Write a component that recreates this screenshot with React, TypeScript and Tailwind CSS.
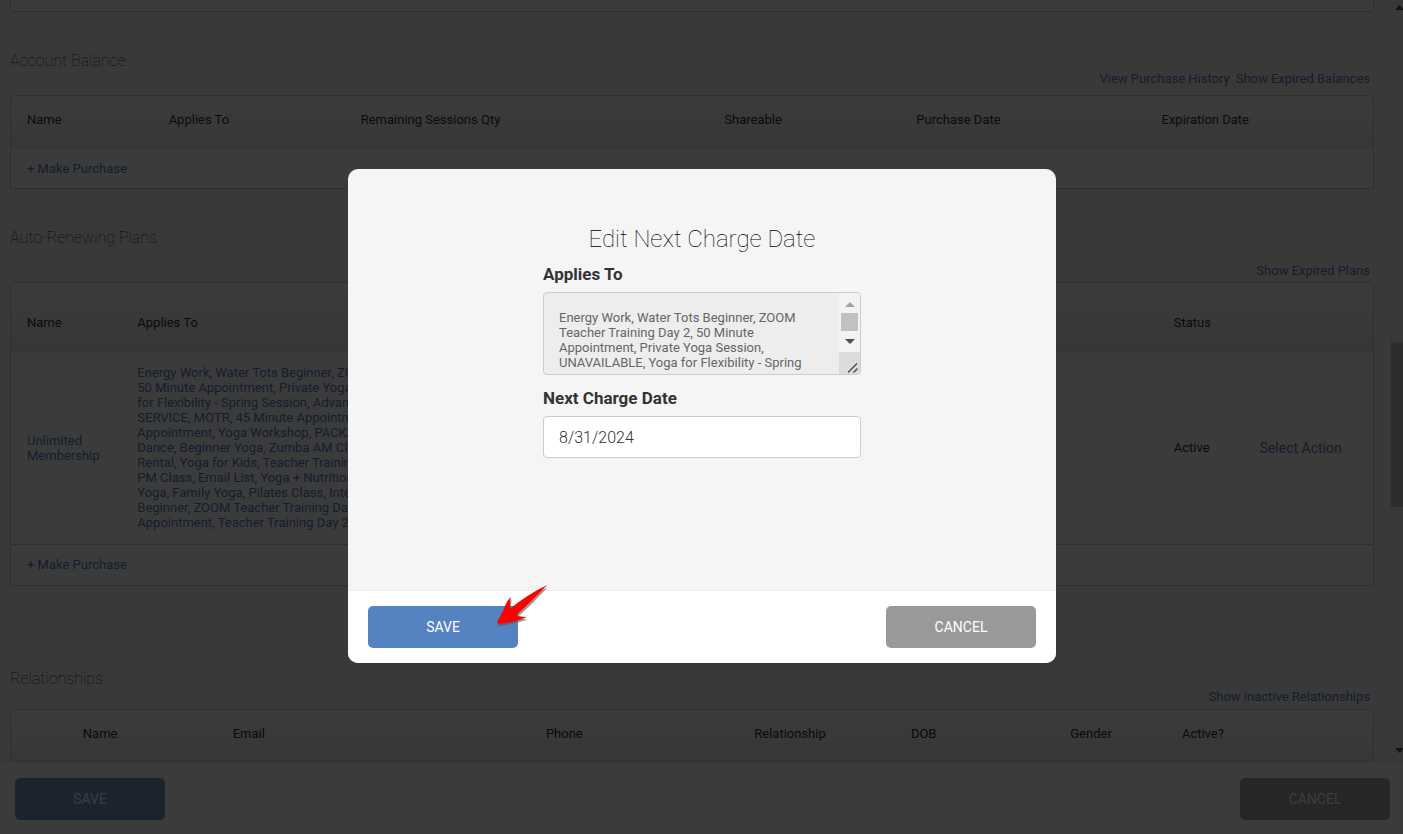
import type { ReactNode } from "react";

const planServices = [
  "Energy Work, Water Tots Beginner, ZOOM Teacher Training Day 2,",
  "50 Minute Appointment, Private Yoga Session, UNAVAILABLE, Yoga",
  "for Flexibility - Spring Session, Advanced Yoga, Massage,",
  "SERVICE, MOTR, 45 Minute Appointment, 30 Minute",
  "Appointment, Yoga Workshop, PACKAGE, Meditation,",
  "Dance, Beginner Yoga, Zumba AM Class, Room",
  "Rental, Yoga for Kids, Teacher Training Day 1, Zumba",
  "PM Class, Email List, Yoga + Nutrition, Prenatal",
  "Yoga, Family Yoga, Pilates Class, Intermediate Yoga,",
  "Beginner, ZOOM Teacher Training Day 1, 60 Minute",
  "Appointment, Teacher Training Day 2",
];

const appliesTo =
  "Energy Work, Water Tots Beginner, ZOOM\nTeacher Training Day 2, 50 Minute\nAppointment, Private Yoga Session,\nUNAVAILABLE, Yoga for Flexibility - Spring";

const link = "text-[#5582c1]";
const frame =
  "w-full table-fixed border-separate border-spacing-0 rounded-t-md border border-[#ccc] bg-white text-[13px] leading-[15px]";

function Section({ title, links, children, className }: { title: string; links: string[]; children: ReactNode; className: string }) {
  return (
    <section className={className}>
      <h2 className="text-base leading-5 font-thin text-[#333]">{title}</h2>
      <div className="flex justify-end gap-1.5 pr-1 text-[13px] leading-[15px]">
        {links.map((text) => (
          <a key={text} href="#" className={link}>
            {text}
          </a>
        ))}
      </div>
      {children}
    </section>
  );
}

function Columns({ items, pad }: { items: [string, string][]; pad: string }) {
  return (
    <thead>
      <tr className="bg-linear-to-b from-white to-[#ebebeb]">
        {items.map(([label, width], i) => (
          <th
            key={i}
            scope="col"
            className={`border-b border-[#ddd] px-4 text-left align-top font-normal text-[#333] first:rounded-tl-md last:rounded-tr-md ${pad} ${width}`}
          >
            {label}
          </th>
        ))}
      </tr>
    </thead>
  );
}

function Page() {
  return (
    <div className="flex h-full flex-col">
      <div className="flex min-h-0 flex-1 bg-[#f5f5f5]">
        <main className="min-w-0 flex-1 overflow-hidden pr-4 pl-2.5">
          <div className="h-3 border border-t-0 border-[#ccc] bg-white" />

          <Section
            title="Account Balance"
            links={["View Purchase History", "Show Expired Balances"]}
            className="pt-[39px] [&>div]:pb-[9px]"
          >
            <table className={frame}>
              <Columns
                pad="pt-4 pb-[21px]"
                items={[
                  ["Name", "w-[10.4%]"],
                  ["Applies To", "w-[14.1%]"],
                  ["Remaining Sessions Qty", "w-[26.7%]"],
                  ["Shareable", "w-[14.1%]"],
                  ["Purchase Date", "w-[18%]"],
                  ["Expiration Date", ""],
                ]}
              />
              <tbody>
                <tr>
                  <td colSpan={6} className="px-4 py-3">
                    <a href="#" className={link}>
                      + Make Purchase
                    </a>
                  </td>
                </tr>
              </tbody>
            </table>
          </Section>

          <Section
            title="Auto-Renewing Plans"
            links={["Show Expired Plans"]}
            className="pt-[39px] [&>div]:pt-[15px] [&>div]:pb-1"
          >
            <table className={frame}>
              <Columns
                pad="pt-8 pb-5"
                items={[
                  ["Name", "w-[8.1%]"],
                  ["Applies To", "w-[29%]"],
                  ["", ""],
                  ["Status", "w-[6.3%]"],
                  ["", "w-[9.5%]"],
                ]}
              />
              <tbody>
                <tr>
                  <td className="py-3 pl-4">
                    <a href="#" className={link}>
                      Unlimited Membership
                    </a>
                  </td>
                  <td className="overflow-hidden px-4 py-3.5 whitespace-nowrap text-[#5582c1]">
                    {planServices.map((line) => (
                      <span key={line} className="block">
                        {line}
                      </span>
                    ))}
                  </td>
                  <td />
                  <td className="px-4 text-[#333]">Active</td>
                  <td className="px-4 text-sm whitespace-nowrap">
                    <a href="#" className={link}>
                      Select Action
                    </a>
                  </td>
                </tr>
                <tr>
                  <td colSpan={5} className="border-t border-[#ccc] px-4 pt-3 pb-[13px]">
                    <a href="#" className={link}>
                      + Make Purchase
                    </a>
                  </td>
                </tr>
              </tbody>
            </table>
          </Section>

          <Section
            title="Relationships"
            links={["Show inactive Relationships"]}
            className="pt-[83px] [&>div]:pb-[5px]"
          >
            <table className={frame}>
              <Columns
                pad="pt-4 pb-5"
                items={[
                  ["", "w-[4.1%]"],
                  ["Name", "w-[11%]"],
                  ["Email", "w-[23%]"],
                  ["Phone", "w-[15.3%]"],
                  ["Relationship", "w-[11.5%]"],
                  ["DOB", "w-[11.7%]"],
                  ["Gender", "w-[8.2%]"],
                  ["Active?", ""],
                ]}
              />
            </table>
          </Section>
        </main>
        <div className="flex w-[13px] flex-col items-end overflow-hidden bg-[#f1f1f1] py-[5px]" aria-hidden="true">
          <svg viewBox="0 0 8 5" className="h-[5px] w-2">
            <path d="M0 5 4.5 0 9 5Z" fill="#505050" />
          </svg>
          <div className="mt-[332px] h-[165px] w-3 bg-[#c1c1c1]" />
          <svg viewBox="0 0 8 5" className="mt-auto mb-1 h-[5px] w-2">
            <path d="M0 0 4.5 5 9 0Z" fill="#505050" />
          </svg>
        </div>
      </div>
      <footer className="flex justify-between border-t border-[#eee] bg-white pt-[15px] pr-[13px] pb-3.5 pl-[15px] text-sm text-white">
        <button type="button" className="h-[42px] w-[150px] rounded-[5px] bg-[#7198c8]">
          SAVE
        </button>
        <button type="button" className="h-[42px] w-[150px] rounded-[5px] bg-[#a5a5a5]">
          CANCEL
        </button>
      </footer>
    </div>
  );
}

function Arrow() {
  return (
    <svg viewBox="468 69 165 144" className="pointer-events-none absolute -top-[23px] left-32 h-12 w-[55px]" aria-hidden="true">
      <path
        d="M620 75 Q558 103 508 148 L512 110 Q496 140 472 180 V192 Q520 184 560 172 L527 167 Q575 125 620 75Z"
        fill="#555"
        opacity=".6"
        transform="translate(3 7)"
      />
      <path d="M621 75 Q560 105 509 147 L512 110 Q495 132 491 150 L471 187 L476 192 Q530 186 560 172 L527 167 Q580 119 621 75Z" fill="#fe0000" />
    </svg>
  );
}

function EditDialog() {
  return (
    <div className="fixed inset-0 flex items-center justify-center bg-black/77 pb-0.5 pl-px">
      <div
        role="dialog"
        aria-modal="true"
        aria-labelledby="dialog-title"
        className="w-[708px] max-w-full rounded-[10px] bg-[#f5f5f5] text-[#333]"
      >
        <div className="mx-auto w-[318px] pt-[54px] pb-[132px]">
          <h1 id="dialog-title" className="text-center text-2xl leading-8 font-thin whitespace-nowrap text-black">
            Edit Next Charge Date
          </h1>
          <label htmlFor="applies" className="mt-[7px] block text-[17px] leading-6 font-bold">
            Applies To
          </label>
          <div className="mt-1.5 flex h-[83px] overflow-hidden rounded border border-[#ccc] bg-[#ededed]">
            <textarea
              id="applies"
              readOnly
              value={appliesTo}
              className="min-w-0 flex-1 resize-none overflow-hidden pt-[17px] pl-[15px] text-[13px] leading-[15px] whitespace-pre text-[#666] outline-none"
            />
            <div className="flex w-[21px] flex-col items-center bg-[#f3f3f3] pt-[9px]" aria-hidden="true">
              <svg viewBox="0 0 10 5" className="h-[5px] w-2.5">
                <path d="M0 5 5 0 10 5Z" fill="#a3a3a3" />
              </svg>
              <div className="mt-1.5 h-[18px] w-[17px] bg-[#c1c1c1]" />
              <svg viewBox="0 0 10 5" className="mt-2 h-[5px] w-2.5">
                <path d="M0 0 5 5 10 0Z" fill="#505050" />
              </svg>
              <div className="mt-auto flex h-[22px] w-full items-end justify-end bg-[#dcdcdc] pr-0.5 pb-px">
                <svg viewBox="0 0 10 10" className="h-2.5 w-2.5">
                  <path d="M0 9.5 9 .5M5.5 9.5 9.5 5.5" stroke="#505050" strokeWidth="1.5" fill="none" />
                </svg>
              </div>
            </div>
          </div>
          <label htmlFor="next-date" className="mt-[11px] block text-[17px] leading-6 font-bold">
            Next Charge Date
          </label>
          <input
            id="next-date"
            type="text"
            defaultValue="8/31/2024"
            className="mt-1.5 h-[42px] w-full rounded border border-[#ccc] bg-white px-[15px] text-base font-light outline-none"
          />
        </div>
        <div className="flex justify-between rounded-b-[10px] border-t border-[#eee] bg-white px-5 py-[15px] text-sm text-white">
          <div className="relative">
            <button type="button" className="h-[42px] w-[150px] rounded-[5px] bg-[#5582c1]">
              SAVE
            </button>
            <Arrow />
          </div>
          <button type="button" className="h-[42px] w-[150px] rounded-[5px] bg-[#999]">
            CANCEL
          </button>
        </div>
      </div>
    </div>
  );
}

export default function App() {
  return (
    <div className="h-screen overflow-hidden font-[Roboto,sans-serif]">
      <Page />
      <EditDialog />
    </div>
  );
}
